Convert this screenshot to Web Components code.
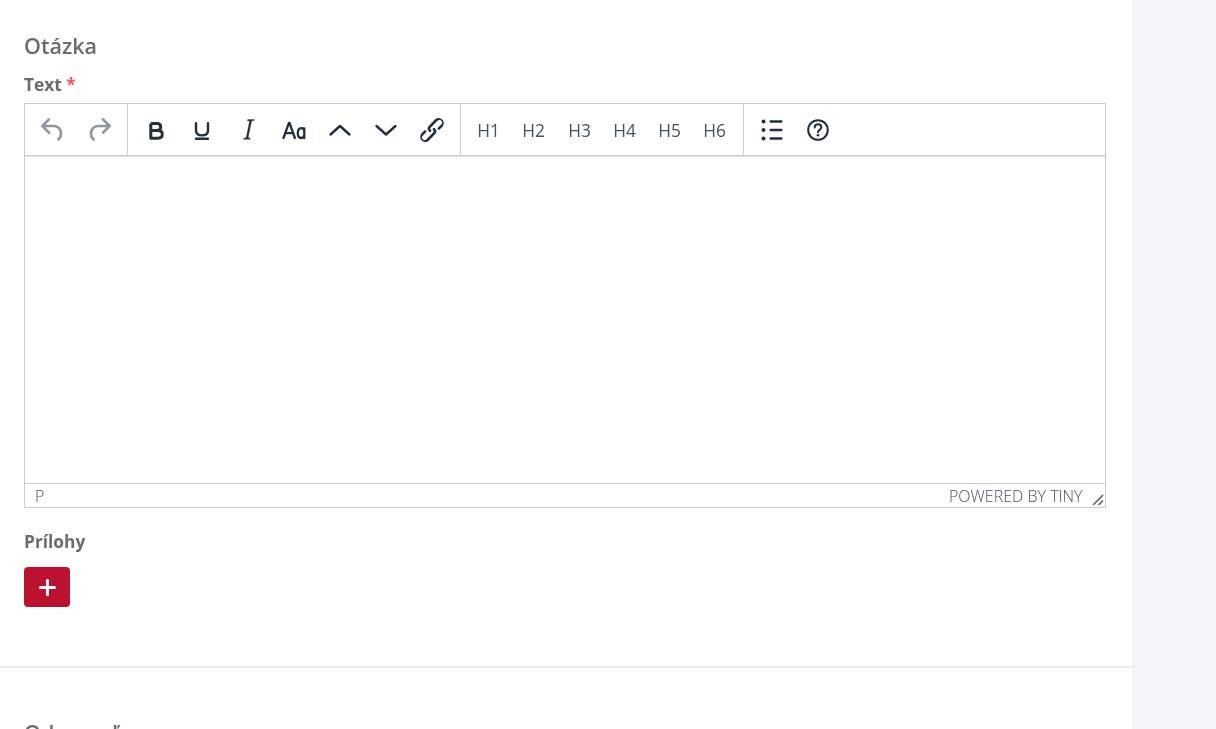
<!doctype html>
<html lang="sk">
<head>
<meta charset="utf-8">
<title>Otázka</title>
<style>
  html, body { margin: 0; height: 729px; overflow: hidden; background: #f4f5fa; }
  body { font-family: "Open Sans", sans-serif; color: #6a6c6f; }
</style>
</head>
<body>
<form-panel>
  <form-section heading="Otázka">
    <form-field label="Text" required>
      <rich-editor></rich-editor>
    </form-field>
    <form-field label="Prílohy" class="attachments">
      <add-button></add-button>
    </form-field>
  </form-section>
  <form-section heading="Odpoveď"></form-section>
</form-panel>

<script>
// icons for the editor toolbar, 24x24 box
const ICONS = {
  undo: '<path fill="currentColor" d="M6.4 8H12c3.7 0 6.2 2 6.8 5.1.6 2.7-.4 5.6-2.3 6.8a1 1 0 0 1-1-1.8c1.1-.7 1.8-2.7 1.4-4.6-.5-2.1-2.1-3.5-4.9-3.5H6.4l3.3 3.3a1 1 0 1 1-1.4 1.4l-5-5a1 1 0 0 1 0-1.4l5-5a1 1 0 0 1 1.4 1.4L6.4 8Z"/>',
  redo: '<path fill="currentColor" d="M17.6 10H12c-2.8 0-4.4 1.4-4.9 3.5-.4 2 .3 3.9 1.4 4.6a1 1 0 1 1-1 1.8c-2-1.2-2.9-4.1-2.3-6.8.6-3 3-5.1 6.8-5.1h5.6l-3.3-3.3a1 1 0 1 1 1.4-1.4l5 5a1 1 0 0 1 0 1.4l-5 5a1 1 0 0 1-1.4-1.4l3.3-3.3Z"/>',
  bold: '<path fill="none" stroke="currentColor" stroke-width="3" stroke-linejoin="round" d="M6.800 5.500v14.700h7.200c3 0 4.300-1.600 4.300-3.900s-1.400-3.800-4.300-3.800H6.800m0 0h6.200c2.500 0 3.700-1.300 3.700-3.500S15.500 5.500 13 5.500H6.800"/>',
  underline: '<path fill="none" stroke="currentColor" stroke-width="2.400" stroke-linecap="round" d="M6 5.300v7.300c0 3 2.400 4.800 6 4.800s6-1.800 6-4.800V5.300M6 20.800h12"/>',
  italic: '<path fill="currentColor" stroke="currentColor" stroke-width=".3" d="M16.700 3.700l-.2.9h-.3c-.6 0-1 .1-1.300.4-.3.3-.5.7-.6 1.200l-2.400 11.600v.6c0 .5.4.8 1.400.8h.2l-.2.9H7.900l.2-.9h.2c1.100 0 1.800-.5 2-1.500l2.400-11.600.1-.5c0-.6-.4-.9-1.400-.9h-.3l.2-.9h5.400Z"/>',
  case: '<path fill="none" stroke="currentColor" stroke-width="2.300" stroke-linecap="round" stroke-linejoin="round" d="M1.500 20 6.900 4.800h.6L12.900 20M3.400 15.200h7.600M22.300 10.300v9.700M22.300 13.500c0-2.300-1.400-3.400-3.200-3.400s-3.300 1.500-3.300 5 1.500 4.900 3.300 4.900 3.200-1.300 3.200-3.400"/>',
  up: '<path fill="none" stroke="currentColor" stroke-width="2.400" stroke-linecap="round" stroke-linejoin="round" d="M2.500 16.500 12 8l9.500 8.500"/>',
  down: '<path fill="none" stroke="currentColor" stroke-width="2.400" stroke-linecap="round" stroke-linejoin="round" d="M2.500 8 12 16.500 21.500 8"/>',
  link: '<path fill="currentColor" d="M6.200 12.300a1 1 0 0 1 1.400 1.400l-2 2a2 2 0 1 0 2.600 2.800l4.800-4.800a1 1 0 0 0 0-1.400 1 1 0 1 1 1.400-1.300 2.900 2.900 0 0 1 0 4L9.600 20a3.900 3.900 0 0 1-5.500-5.500l2-2Zm11.600-.6a1 1 0 0 1-1.400-1.400l2-2a2 2 0 1 0-2.600-2.800L11 10.300a1 1 0 0 0 0 1.400A1 1 0 1 1 9.600 13a2.900 2.900 0 0 1 0-4L14.400 4a3.900 3.900 0 0 1 5.500 5.500l-2 2Z"/>',
  list: '<g fill="currentColor"><circle cx="3.500" cy="3.500" r="2"/><circle cx="3.500" cy="12" r="2"/><circle cx="3.500" cy="20.500" r="2"/><rect x="9.500" y="2.200" width="13" height="2.600" rx="1"/><rect x="9.500" y="10.700" width="13" height="2.600" rx="1"/><rect x="9.500" y="19.200" width="13" height="2.600" rx="1"/></g>',
  help: '<circle cx="12" cy="12" r="9.800" fill="none" stroke="currentColor" stroke-width="2"/><path fill="none" stroke="currentColor" stroke-width="2" stroke-linecap="round" d="M8.700 9.500c0-2 1.500-3.300 3.300-3.300s3.300 1.200 3.300 3c0 2.700-3.300 2.600-3.300 5"/><circle cx="12" cy="17.300" r="1.300" fill="currentColor"/>'
};

class FormPanel extends HTMLElement {
  constructor() {
    super();
    this.attachShadow({ mode: "open" });
    this.shadowRoot.innerHTML = `
    <style>
      :host {
        display: block;
        box-sizing: border-box;
        width: 1134px;
        height: 729px;
        background: #fff;
        border-right: 1px solid #e9eaee;
        overflow: hidden;
      }
    </style>
    <slot></slot>`;
  }
}

class FormSection extends HTMLElement {
  constructor() {
    super();
    this.attachShadow({ mode: "open" });
    this.shadowRoot.innerHTML = `
    <style>
      :host {
        display: block;
        padding: 32px 27px 59px 24px;
        border-bottom: 2px solid #eeeeee;
      }
      :host(:last-child) { border-bottom: none; padding-top: 51px; }
      h2 {
        margin: 0;
        font-size: 21.5px;
        line-height: 28px;
        font-weight: 600;
        color: #6a6c6f;
        will-change: transform; /* grey text edges */
      }
    </style>
    <h2></h2>
    <slot></slot>`;
    this.shadowRoot.querySelector("h2").textContent = this.getAttribute("heading");
  }
}

class FormField extends HTMLElement {
  constructor() {
    super();
    this.attachShadow({ mode: "open" });
    this.shadowRoot.innerHTML = `
    <style>
      :host { display: block; margin-top: 12px; }
      :host(.attachments) { margin-top: 21px; }
      label {
        display: block;
        font-size: 17.33px;
        line-height: 24px;
        font-weight: 700;
        color: #6a6c6f;
        margin-bottom: 7px;
        will-change: transform;
      }
      :host(.attachments) label { margin-bottom: 14px; }
      span { color: #f1556c; }
    </style>
    <label></label>
    <slot></slot>`;
    const label = this.shadowRoot.querySelector("label");
    label.textContent = this.getAttribute("label");
    if (this.hasAttribute("required")) {
      const star = document.createElement("span");
      star.textContent = " *";
      label.append(star);
    }
  }
}

class ToolButton extends HTMLElement {
  constructor() {
    super();
    this.attachShadow({ mode: "open" });
    const icon = this.getAttribute("icon");
    const size = this.getAttribute("size") || 24;
    this.shadowRoot.innerHTML = `
    <style>
      :host {
        display: flex;
        align-items: center;
        justify-content: center;
        flex: none;
        width: 46px;
        height: 51px;
        color: #222f3e;
        font-size: 17.33px;
      }
      :host([disabled]) { color: rgba(34, 47, 62, 0.5); }
      :host([text]) { width: 45.3px; color: #47525f; padding-top: 1px; height: 50px; will-change: transform; }
      svg { display: block; }
    </style>
    ${icon ? `<svg width="${size}" height="${size}" viewBox="0 0 24 24">${ICONS[icon]}</svg>` : "<slot></slot>"}`;
  }
}

class ToolGroup extends HTMLElement {
  constructor() {
    super();
    this.attachShadow({ mode: "open" });
    this.shadowRoot.innerHTML = `
    <style>
      :host {
        display: flex;
        padding: 0 5px;
        border-right: 1px solid #cccccc;
      }
      :host(:last-child) { border-right: none; }
    </style>
    <slot></slot>`;
  }
}

class RichEditor extends HTMLElement {
  constructor() {
    super();
    this.attachShadow({ mode: "open" });
    this.shadowRoot.innerHTML = `
    <style>
      :host {
        display: block;
        box-sizing: border-box;
        height: 405px;
        border: 1px solid #cccccc;
        background: #fff;
        display: flex;
        flex-direction: column;
      }
      .toolbar {
        display: flex;
        height: 51px;
        border-bottom: 1px solid #cccccc;
        box-shadow: 0 1px 0 #e3e3e3;
      }
      .area { flex: 1; }
      .status {
        display: flex;
        justify-content: space-between;
        align-items: center;
        height: 23px;
        border-top: 1px solid #cccccc;
        padding: 0 22px 0 10px;
        font-size: 16px;
        font-weight: 300;
        color: rgba(34, 47, 62, 0.85);
        position: relative;
      }
      .status span { will-change: transform; }
      .grip { position: absolute; right: 1px; bottom: 1px; }
    </style>
    <div class="toolbar">
      <tool-group>
        <tool-button icon="undo" size="32" disabled></tool-button>
        <tool-button icon="redo" size="32" disabled></tool-button>
      </tool-group>
      <tool-group>
        <tool-button icon="bold"></tool-button>
        <tool-button icon="underline"></tool-button>
        <tool-button icon="italic" size="29"></tool-button>
        <tool-button icon="case"></tool-button>
        <tool-button icon="up"></tool-button>
        <tool-button icon="down"></tool-button>
        <tool-button icon="link" size="32"></tool-button>
      </tool-group>
      <tool-group>
        <tool-button text>H1</tool-button>
        <tool-button text>H2</tool-button>
        <tool-button text>H3</tool-button>
        <tool-button text>H4</tool-button>
        <tool-button text>H5</tool-button>
        <tool-button text>H6</tool-button>
      </tool-group>
      <tool-group>
        <tool-button icon="list"></tool-button>
        <tool-button icon="help"></tool-button>
      </tool-group>
    </div>
    <div class="area"></div>
    <div class="status">
      <span>P</span>
      <span>POWERED BY TINY</span>
      <svg class="grip" width="12" height="12" viewBox="0 0 12 12">
        <path fill="none" stroke="#5b6570" stroke-width="1.600" d="M1 11 11 1M6.500 11 11 6.500"/>
      </svg>
    </div>`;
  }
}

class AddButton extends HTMLElement {
  constructor() {
    super();
    this.attachShadow({ mode: "open" });
    this.shadowRoot.innerHTML = `
    <style>
      :host {
        display: flex;
        align-items: center;
        justify-content: center;
        width: 46px;
        height: 40px;
        border-radius: 4px;
        background: #bc1232;
      }
    </style>
    <svg width="17" height="17" viewBox="0 0 17 17">
      <path fill="none" stroke="#fff" stroke-width="3" stroke-linecap="round" d="M8.500 1.500v14M1.500 8.500h14"/>
    </svg>`;
  }
}

customElements.define("form-panel", FormPanel);
customElements.define("form-section", FormSection);
customElements.define("form-field", FormField);
customElements.define("tool-button", ToolButton);
customElements.define("tool-group", ToolGroup);
customElements.define("rich-editor", RichEditor);
customElements.define("add-button", AddButton);
</script>
</body>
</html>
